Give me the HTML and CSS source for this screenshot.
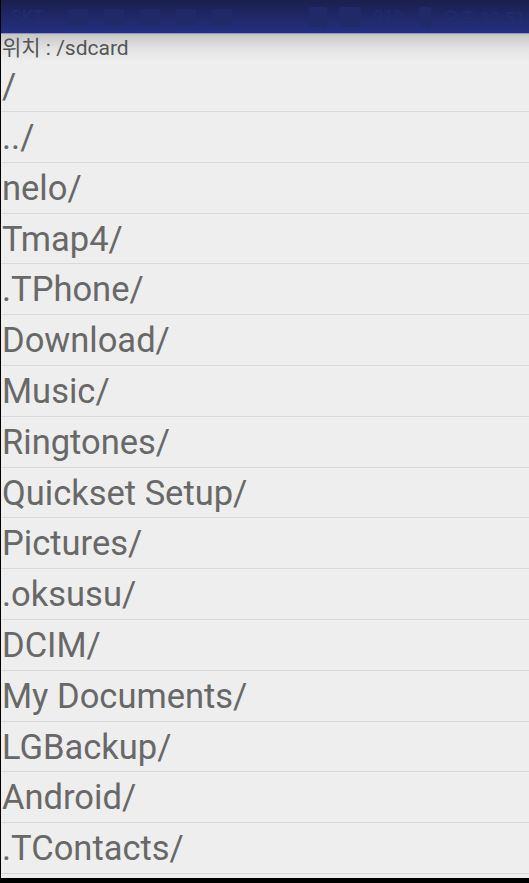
FILE: index.html
```html
<!DOCTYPE html>
<html lang="ko">
<head>
<meta charset="utf-8">
<link rel="stylesheet" href="styles.css">
</head>
<body>
<div class="screen">
  <div class="statusbar">
    <span class="sb-text">SKT</span>
    <span class="sb-icons">
      <span class="ghost g1"></span><span class="ghost g2"></span><span class="ghost g3"></span><span class="ghost g4"></span><span class="ghost g5"></span>
    </span>
    <span class="sb-right"><span class="ghost g6"></span><span class="ghost g7"></span><span class="sb-text">91%</span><span class="ghost g8"></span><span class="sb-text">오후 12:51</span></span>
  </div>
  <div class="content">
    <div class="location">위치 : /sdcard</div>
    <ul class="list">
      <li>/</li>
      <li>../</li>
      <li>nelo/</li>
      <li>Tmap4/</li>
      <li>.TPhone/</li>
      <li>Download/</li>
      <li>Music/</li>
      <li>Ringtones/</li>
      <li>Quickset Setup/</li>
      <li>Pictures/</li>
      <li>.oksusu/</li>
      <li>DCIM/</li>
      <li>My Documents/</li>
      <li>LGBackup/</li>
      <li>Android/</li>
      <li>.TContacts/</li>
    </ul>
  </div>
</div>
</body>
</html>
```
FILE: styles.css
```css
html, body {
  margin: 0;
  padding: 0;
  background: #000;
  height: 883px;
  overflow: hidden;
}
.screen {
  margin-left: 1px;
  width: 528px;
  height: 878px;
  display: flex;
  flex-direction: column;
  overflow: hidden;
  font-family: Roboto, "Noto Sans CJK KR", sans-serif;
}
.statusbar {
  height: 33px;
  flex: none;
  background: linear-gradient(#1b1f4e, #243080);
  border-bottom: 1px solid #8d92bb;
  display: flex;
  align-items: center;
  padding: 0 4px 0 10px;
  gap: 24px;
  font-size: 18px;
  white-space: nowrap;
  overflow: hidden;
}
.sb-text { color: #232c6c; white-space: nowrap; }
.sb-icons { display: flex; gap: 16px; align-items: center; }
.sb-right { margin-left: auto; display: flex; gap: 12px; align-items: center; flex: none; }
.ghost { display: inline-block; width: 20px; height: 16px; background: #212a68; border-radius: 2px; }
.g6 { width: 18px; height: 20px; }
.g7 { width: 22px; height: 20px; }
.g8 { width: 12px; height: 20px; }
.content {
  flex: 1;
  background: linear-gradient(#c6c6c6 0, #e2e2e2 14px, #eeeeee 28px, #eeeeee 100%);
  display: flex;
  flex-direction: column;
}
.location {
  height: 27.2px;
  font-size: 21px;
  line-height: 28px;
  color: #555;
  padding-left: 1px;
}
.list {
  list-style: none;
  margin: 0;
  padding: 0;
}
.list li {
  height: 49.8px;
  border-bottom: 1px solid #d8d8d8;
  font-size: 34.5px;
  line-height: 51px;
  color: #686868;
  font-weight: 400;
  padding-left: 1px;
  white-space: nowrap;
}
```
